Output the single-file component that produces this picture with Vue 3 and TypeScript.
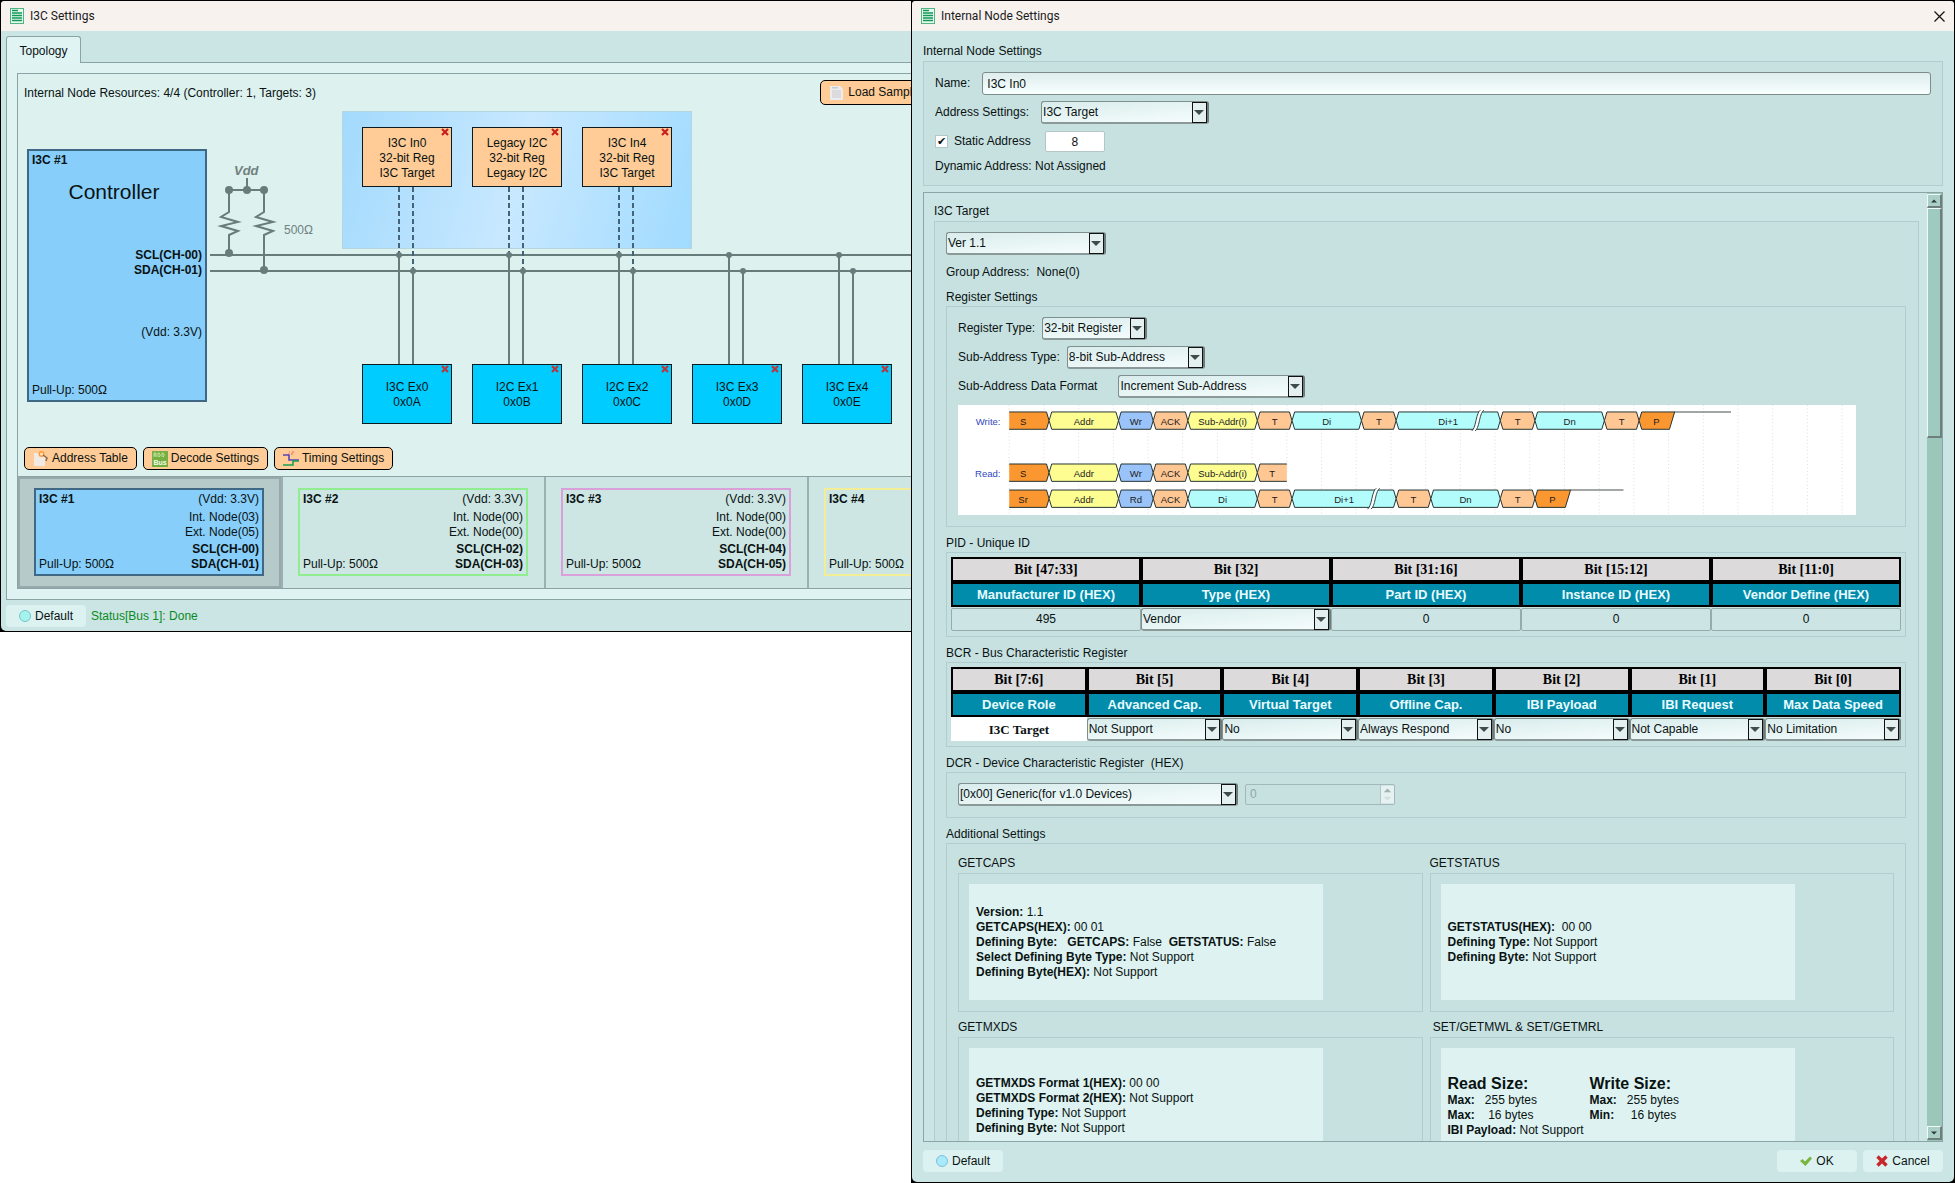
<script setup lang="ts">
import { ref } from 'vue'

interface TopologyNode { lines: string[]; column: number }
interface Bus { id: number; tone: string; detail?: { internal: string; external: string; scl: string; sda: string } }
interface Segment { from: number; to: number; text: string; fill: string; open?: boolean; end?: boolean; breakAt?: number; textAt?: number }
interface Lane { label: string; y: number; segments: Segment[]; tail?: [number, number] }

const internalNodes: TopologyNode[] = [
  { lines: ['I3C In0', '32-bit Reg', 'I3C Target'], column: 0 },
  { lines: ['Legacy I2C', '32-bit Reg', 'Legacy I2C'], column: 1 },
  { lines: ['I3C In4', '32-bit Reg', 'I3C Target'], column: 2 },
]
const externalNodes: TopologyNode[] = [
  { lines: ['I3C Ex0', '0x0A'], column: 0 },
  { lines: ['I2C Ex1', '0x0B'], column: 1 },
  { lines: ['I2C Ex2', '0x0C'], column: 2 },
  { lines: ['I3C Ex3', '0x0D'], column: 3 },
  { lines: ['I3C Ex4', '0x0E'], column: 4 },
]
const nodeLeft = (column: number): string => `${344 + column * 110}px`

const buses: Bus[] = [
  { id: 1, tone: 'active', detail: { internal: '03', external: '05', scl: '00', sda: '01' } },
  { id: 2, tone: 'green', detail: { internal: '00', external: '00', scl: '02', sda: '03' } },
  { id: 3, tone: 'violet', detail: { internal: '00', external: '00', scl: '04', sda: '05' } },
  { id: 4, tone: 'yellow' },
]

const deep = '#fb9731'
const yellow = '#fdfd92'
const blue = '#9ac4f9'
const peach = '#ffc793'
const cyan = '#b2fdfc'

const lanes: Lane[] = [
  {
    label: 'Write:', y: 8, tail: [825, 891],
    segments: [
      { from: 0, to: 1, text: 'S', fill: deep, open: true, textAt: 75 },
      { from: 1, to: 3, text: 'Addr', fill: yellow },
      { from: 3, to: 4, text: 'Wr', fill: blue },
      { from: 4, to: 5, text: 'ACK', fill: peach },
      { from: 5, to: 7, text: 'Sub-Addr(i)', fill: yellow },
      { from: 7, to: 8, text: 'T', fill: peach },
      { from: 8, to: 10, text: 'Di', fill: cyan },
      { from: 10, to: 11, text: 'T', fill: peach },
      { from: 11, to: 14, text: 'Di+1', fill: cyan, breakAt: 598 },
      { from: 14, to: 15, text: 'T', fill: peach },
      { from: 15, to: 17, text: 'Dn', fill: cyan },
      { from: 17, to: 18, text: 'T', fill: peach },
      { from: 18, to: 19, text: 'P', fill: deep, end: true },
    ],
  },
  {
    label: 'Read:', y: 68,
    segments: [
      { from: 0, to: 1, text: 'S', fill: deep, open: true, textAt: 75 },
      { from: 1, to: 3, text: 'Addr', fill: yellow },
      { from: 3, to: 4, text: 'Wr', fill: blue },
      { from: 4, to: 5, text: 'ACK', fill: peach },
      { from: 5, to: 7, text: 'Sub-Addr(i)', fill: yellow },
      { from: 7, to: 8, text: 'T', fill: peach, open: true, textAt: 362 },
    ],
  },
  {
    label: '', y: 98, tail: [705, 767],
    segments: [
      { from: 0, to: 1, text: 'Sr', fill: deep, open: true, textAt: 75 },
      { from: 1, to: 3, text: 'Addr', fill: yellow },
      { from: 3, to: 4, text: 'Rd', fill: blue },
      { from: 4, to: 5, text: 'ACK', fill: peach },
      { from: 5, to: 7, text: 'Di', fill: cyan },
      { from: 7, to: 8, text: 'T', fill: peach },
      { from: 8, to: 11, text: 'Di+1', fill: cyan, breakAt: 478 },
      { from: 11, to: 12, text: 'T', fill: peach },
      { from: 12, to: 14, text: 'Dn', fill: cyan },
      { from: 14, to: 15, text: 'T', fill: peach },
      { from: 15, to: 16, text: 'P', fill: deep, end: true },
    ],
  },
]

const edge = (unit: number): number => 65 + unit * 40

/* Closed outline that fills a segment */
function fillPath(s: Segment, y: number): string {
  const a = edge(s.from)
  const b = edge(s.to)
  const m = y + 10
  const z = y + 20
  if (s.open && s.from === 0) return `M59 ${y}H${b - 3}L${b} ${m}L${b - 3} ${z}H59Z`
  if (s.open) return `M${a} ${m}L${a + 3} ${y}H${b - 6}V${z}H${a + 3}Z`
  if (s.end) return `M${a} ${m}L${a + 3} ${y}H${b + 1}L${b - 5} ${z}H${a + 3}Z`
  return `M${a} ${m}L${a + 3} ${y}H${b - 3}L${b} ${m}L${b - 3} ${z}H${a + 3}Z`
}

/* Stroke of the same segment; open sides stay undrawn */
function strokePath(s: Segment, y: number): string {
  const a = edge(s.from)
  const b = edge(s.to)
  const m = y + 10
  const z = y + 20
  if (s.open && s.from === 0) return `M59 ${y}H${b - 3}L${b} ${m}L${b - 3} ${z}H59`
  if (s.open) return `M${b - 6} ${y}H${a + 3}L${a} ${m}L${a + 3} ${z}H${b - 6}`
  return fillPath(s, y)
}

const textX = (s: Segment): number => s.textAt ?? (edge(s.from) + edge(s.to)) / 2

const pidColumns = [
  { bits: 'Bit [47:33]', name: 'Manufacturer ID (HEX)', value: '495' },
  { bits: 'Bit [32]', name: 'Type (HEX)', value: 'Vendor', select: true },
  { bits: 'Bit [31:16]', name: 'Part ID (HEX)', value: '0' },
  { bits: 'Bit [15:12]', name: 'Instance ID (HEX)', value: '0' },
  { bits: 'Bit [11:0]', name: 'Vendor Define (HEX)', value: '0' },
]
const bcrColumns = [
  { bits: 'Bit [7:6]', name: 'Device Role', value: 'I3C Target', fixed: true },
  { bits: 'Bit [5]', name: 'Advanced Cap.', value: 'Not Support' },
  { bits: 'Bit [4]', name: 'Virtual Target', value: 'No' },
  { bits: 'Bit [3]', name: 'Offline Cap.', value: 'Always Respond' },
  { bits: 'Bit [2]', name: 'IBI Payload', value: 'No' },
  { bits: 'Bit [1]', name: 'IBI Request', value: 'Not Capable' },
  { bits: 'Bit [0]', name: 'Max Data Speed', value: 'No Limitation' },
]

const nodeName = ref('I3C In0')
const staticEnabled = ref(true)
const staticAddress = ref('8')
</script>

<template>
  <div class="desktop">
    <section class="window main-window" aria-label="I3C Settings">
      <header class="titlebar">
        <svg class="app-icon" viewBox="0 0 14 16"><rect x=".5" y=".5" width="13" height="15" fill="#e9f8ef" stroke="#4fb583" /><path d="M2 2.5h6M2 5h10M2 7.5h10M2 10h10M2 12.5h10" stroke="#12995a" stroke-width="1.4" /></svg>
        <h1>I3C Settings</h1>
      </header>
      <div class="main-body">
        <nav class="tabs"><button type="button" class="tab">Topology</button></nav>
        <div class="tab-pane">
          <div class="frame">
            <div class="resources">
              <p>Internal Node Resources: 4/4 (Controller: 1, Targets: 3)</p>
              <button type="button" class="tool load">
                <svg viewBox="0 0 16 16"><path d="M1 1h10l3 3v11H1z" fill="#ececec" /><path d="M3 2h6v1.5H3z" fill="#c3cbd4" /><path d="M3 5h9v8H3z" fill="#dcdadd" /></svg>
                Load Sample
              </button>
            </div>

            <div class="canvas">
              <div class="internal-zone"></div>
              <svg class="wires" width="1052" height="342" viewBox="0 0 1052 342" fill="none" stroke="#677d7c" stroke-width="2">
                <path d="M192 150H1052M192 166H1052" />
                <path d="M229 73v12M211 85h35M211 85v22l-8 5 17 5-17 4 17 5-9 4v18M246 85v22l-8 5 17 5-17 4 17 5-9 4v35" />
                <g fill="#677d7c" stroke="none">
                  <circle cx="211" cy="85" r="4" /><circle cx="229" cy="85" r="4" /><circle cx="246" cy="85" r="4" />
                  <circle cx="211" cy="148" r="4" /><circle cx="246" cy="165" r="4" />
                </g>
                <g v-for="node in internalNodes" :key="'in' + node.column" stroke="#44647a" stroke-dasharray="5 3">
                  <path :d="`M${381 + node.column * 110} 82V150M${395 + node.column * 110} 82V166`" />
                </g>
                <g v-for="node in externalNodes" :key="'ex' + node.column">
                  <path :d="`M${381 + node.column * 110} 150V260M${395 + node.column * 110} 166V260`" />
                  <circle :cx="381 + node.column * 110" cy="150" r="3" fill="#677d7c" stroke="none" />
                  <circle :cx="395 + node.column * 110" cy="166" r="3" fill="#677d7c" stroke="none" />
                </g>
              </svg>
              <span class="vdd">Vdd</span>
              <span class="ohm">500Ω</span>
              <div class="controller">
                <b>I3C #1</b>
                <span class="role">Controller</span>
                <div class="pins"><b>SCL(CH-00)</b><b>SDA(CH-01)</b></div>
                <span class="supply">(Vdd: 3.3V)</span>
                <span class="pull">Pull-Up: 500Ω</span>
              </div>
              <div v-for="node in internalNodes" :key="'a' + node.column" class="node internal" :style="{ left: nodeLeft(node.column) }">
                <button type="button" class="remove" aria-label="Remove"><svg viewBox="0 0 8 8"><path d="M1 1l6 6M7 1L1 7" stroke="#c6211f" stroke-width="2.2" /></svg></button>
                <span v-for="(line, i) in node.lines" :key="i">{{ line }}</span>
              </div>
              <div v-for="node in externalNodes" :key="'b' + node.column" class="node external" :style="{ left: nodeLeft(node.column) }">
                <button type="button" class="remove" aria-label="Remove"><svg viewBox="0 0 8 8"><path d="M1 1l6 6M7 1L1 7" stroke="#b9363c" stroke-width="2.2" /></svg></button>
                <span v-for="(line, i) in node.lines" :key="i">{{ line }}</span>
              </div>
            </div>

            <div class="tools">
              <button type="button" class="tool">
                <svg viewBox="0 0 16 16"><path d="M1 2h8l3 3v10H1z" fill="#f0e9e4" /><circle cx="8.5" cy="3" r="3" fill="#ff9a3c" /><circle cx="8.5" cy="3" r="1.5" fill="#ffe9c9" /><path d="M10 4l4 3-1 3" fill="none" stroke="#8a6a55" stroke-width="1.5" /></svg>
                Address Table
              </button>
              <button type="button" class="tool">
                <svg viewBox="0 0 16 16"><rect width="16" height="16" fill="#76b043" /><path d="M2 6V2h2v4M2 4h2M6 6V2h1l1 1v2L7 6M10 6V2h1l1 1v2l-1 1" fill="none" stroke="#c3e29c" /><text x="8" y="14" text-anchor="middle" font-size="7" font-weight="700" fill="#f3fbe8">Bus</text></svg>
                Decode Settings
              </button>
              <button type="button" class="tool">
                <svg viewBox="0 0 16 16"><path d="M6 1h1M8 3h2M5 3h1M9 1h2" stroke="#e8615d" fill="none" /><path d="M0 4h6v5h10" stroke="#5747b8" stroke-width="1.6" fill="none" /><path d="M0 14h10v-4h6" stroke="#17a354" stroke-width="1.6" fill="none" /></svg>
                Timing Settings
              </button>
            </div>

            <div class="buses">
              <article v-for="bus in buses" :key="bus.id" class="bus" :class="bus.tone">
                <div class="card">
                  <div class="column">
                    <b>I3C #{{ bus.id }}</b>
                    <span>Pull-Up: 500Ω</span>
                  </div>
                  <div v-if="bus.detail" class="column end">
                    <span>(Vdd: 3.3V)</span>
                    <div class="counts"><span>Int. Node({{ bus.detail.internal }})</span><span>Ext. Node({{ bus.detail.external }})</span></div>
                    <div class="counts"><b>SCL(CH-{{ bus.detail.scl }})</b><b>SDA(CH-{{ bus.detail.sda }})</b></div>
                  </div>
                </div>
              </article>
            </div>
          </div>
        </div>
        <footer class="statusbar">
          <button type="button" class="flat">
            <svg viewBox="0 0 12 12"><circle cx="6" cy="6" r="5.5" fill="#a4f3ef" stroke="#76c4c9" /></svg>
            Default
          </button>
          <output class="status">Status[Bus 1]: Done</output>
        </footer>
      </div>
    </section>

    <section class="window node-window" aria-label="Internal Node Settings">
      <header class="titlebar">
        <svg class="app-icon" viewBox="0 0 14 16"><rect x=".5" y=".5" width="13" height="15" fill="#e9f8ef" stroke="#4fb583" /><path d="M2 2.5h6M2 5h10M2 7.5h10M2 10h10M2 12.5h10" stroke="#12995a" stroke-width="1.4" /></svg>
        <h1>Internal Node Settings</h1>
        <button type="button" class="close" aria-label="Close"><svg viewBox="0 0 11 11"><path d="M.5.5l10 10M10.5.5l-10 10" stroke="#111" stroke-width="1.2" /></svg></button>
      </header>

      <div class="node-body">
        <h2>Internal Node Settings</h2>
        <div class="box form">
          <div class="field"><label for="name">Name:</label><input id="name" v-model="nodeName" class="text-input" type="text"></div>
          <div class="field">
            <label for="addr">Address Settings:</label>
            <span class="combo w-168"><select id="addr"><option>I3C Target</option></select></span>
          </div>
          <div class="field static">
            <label><input v-model="staticEnabled" type="checkbox">Static Address</label>
            <input v-model="staticAddress" class="address" type="text" aria-label="Static Address value">
          </div>
          <p>Dynamic Address: Not Assigned</p>
        </div>

        <div class="scroll-pane">
          <div class="scroll-content">
            <h2>I3C Target</h2>
            <div class="box target">
              <span class="combo w-160"><select aria-label="Version"><option>Ver 1.1</option></select></span>
              <p class="group-address"><span>Group Address:</span><span>None(0)</span></p>

              <h2>Register Settings</h2>
              <div class="box form">
                <div class="field tight"><label for="rt">Register Type:</label><span class="combo w-105"><select id="rt"><option>32-bit Register</option></select></span></div>
                <div class="field tight"><label for="st">Sub-Address Type:</label><span class="combo w-138"><select id="st"><option>8-bit Sub-Address</option></select></span></div>
                <div class="field loose"><label for="sf">Sub-Address Data Format</label><span class="combo w-187"><select id="sf"><option>Increment Sub-Address</option></select></span></div>
                <svg class="timing" viewBox="0 0 1035 127" role="img" aria-label="Sub-address timing">
                  <path v-for="k in 25" :key="k" :d="`M${19 + k * 40} 0V127`" stroke="#d3d3d3" stroke-dasharray="1 3" />
                  <g v-for="lane in lanes" :key="lane.y">
                    <text x="49" :y="lane.y + 15" text-anchor="end" fill="#3448c0">{{ lane.label }}</text>
                    <g v-for="s in lane.segments" :key="s.from">
                      <path :d="fillPath(s, lane.y)" :fill="s.fill" />
                      <path :d="strokePath(s, lane.y)" fill="none" stroke="#1c2b2b" stroke-width="1.1" />
                      <template v-if="s.breakAt">
                        <path :d="`M${s.breakAt - 6} ${lane.y + 22}q3-2 5-12t5-12h4q-3 2-5 12t-5 12z`" fill="#fff" />
                        <path :d="`M${s.breakAt - 6} ${lane.y + 22}q3-2 5-12t5-12M${s.breakAt - 2} ${lane.y + 22}q3-2 5-12t5-12`" fill="none" stroke="#1c2b2b" />
                      </template>
                      <text :x="textX(s)" :y="lane.y + 15" text-anchor="middle" fill="#1b1b1b">{{ s.text }}</text>
                    </g>
                    <path v-if="lane.tail" :d="`M${lane.tail[0]} ${lane.y}H${lane.tail[1]}`" stroke="#4a5153" stroke-width="1.2" />
                  </g>
                </svg>
              </div>

              <h2>PID - Unique ID</h2>
              <div class="box grid-box">
                <table>
                  <thead>
                    <tr><th v-for="c in pidColumns" :key="c.bits" class="bits">{{ c.bits }}</th></tr>
                    <tr><th v-for="c in pidColumns" :key="c.name" class="name">{{ c.name }}</th></tr>
                  </thead>
                  <tbody>
                    <tr>
                      <td v-for="c in pidColumns" :key="c.name">
                        <span v-if="c.select" class="combo"><select :aria-label="c.name"><option>{{ c.value }}</option></select></span>
                        <input v-else class="cell-input" type="text" :value="c.value" :aria-label="c.name">
                      </td>
                    </tr>
                  </tbody>
                </table>
              </div>

              <h2>BCR - Bus Characteristic Register</h2>
              <div class="box grid-box">
                <table>
                  <thead>
                    <tr><th v-for="c in bcrColumns" :key="c.bits" class="bits">{{ c.bits }}</th></tr>
                    <tr><th v-for="c in bcrColumns" :key="c.name" class="name">{{ c.name }}</th></tr>
                  </thead>
                  <tbody>
                    <tr>
                      <td v-for="c in bcrColumns" :key="c.name" :class="{ fixed: c.fixed }">
                        <template v-if="c.fixed">{{ c.value }}</template>
                        <span v-else class="combo"><select :aria-label="c.name"><option>{{ c.value }}</option></select></span>
                      </td>
                    </tr>
                  </tbody>
                </table>
              </div>

              <h2>DCR - Device Characteristic Register&nbsp; (HEX)</h2>
              <div class="box form">
                <div class="field tight">
                  <span class="combo w-280"><select aria-label="Device characteristic"><option>[0x00] Generic(for v1.0 Devices)</option></select></span>
                  <span class="spin">
                    <input type="number" value="0" disabled aria-label="Device characteristic value">
                    <svg viewBox="0 0 14 19"><rect width="14" height="19" fill="#e6f1f1" /><path d="M3 7l4-4 4 4z" fill="#a4b4b4" /><path d="M3 12l4 4 4-4z" fill="#d3dede" /></svg>
                  </span>
                </div>
              </div>

              <h2>Additional Settings</h2>
              <div class="box additional">
                <section>
                  <h2>GETCAPS</h2>
                  <div class="box reply">
                    <div class="panel">
                      <p><b>Version:</b> 1.1</p>
                      <p><b>GETCAPS(HEX):</b> 00 01</p>
                      <p><b>Defining Byte:&nbsp;&nbsp; GETCAPS:</b> False&nbsp; <b>GETSTATUS:</b> False</p>
                      <p><b>Select Defining Byte Type:</b> Not Support</p>
                      <p><b>Defining Byte(HEX):</b> Not Support</p>
                    </div>
                  </div>
                </section>
                <section>
                  <h2>GETSTATUS</h2>
                  <div class="box reply">
                    <div class="panel">
                      <p><b>GETSTATUS(HEX):</b>&nbsp; 00 00</p>
                      <p><b>Defining Type:</b> Not Support</p>
                      <p><b>Defining Byte:</b> Not Support</p>
                    </div>
                  </div>
                </section>
                <section>
                  <h2>GETMXDS</h2>
                  <div class="box reply">
                    <div class="panel">
                      <p><b>GETMXDS Format 1(HEX):</b> 00 00</p>
                      <p><b>GETMXDS Format 2(HEX):</b> Not Support</p>
                      <p><b>Defining Type:</b> Not Support</p>
                      <p><b>Defining Byte:</b> Not Support</p>
                    </div>
                  </div>
                </section>
                <section>
                  <h2>&nbsp;SET/GETMWL &amp; SET/GETMRL</h2>
                  <div class="box reply">
                    <div class="panel">
                      <div class="sizes">
                        <div>
                          <h3>Read Size:</h3>
                          <p><b>Max:</b>&nbsp;&nbsp; 255 bytes</p>
                          <p><b>Max:</b>&nbsp;&nbsp;&nbsp; 16 bytes</p>
                        </div>
                        <div>
                          <h3>Write Size:</h3>
                          <p><b>Max:</b>&nbsp;&nbsp; 255 bytes</p>
                          <p><b>Min:</b>&nbsp;&nbsp;&nbsp;&nbsp; 16 bytes</p>
                        </div>
                      </div>
                      <p><b>IBI Payload:</b> Not Support</p>
                    </div>
                  </div>
                </section>
              </div>
            </div>
          </div>
          <div class="scrollbar">
            <button type="button" aria-label="Scroll up"><svg viewBox="0 0 10 10"><path d="M2 6.5l3-3 3 3z" fill="#2c3c3a" /></svg></button>
            <div class="track"><div class="thumb"></div></div>
            <button type="button" aria-label="Scroll down"><svg viewBox="0 0 10 10"><path d="M2 3.5l3 3 3-3z" fill="#2c3c3a" /></svg></button>
          </div>
        </div>

        <footer class="actions">
          <button type="button" class="flat default">
            <svg viewBox="0 0 12 12"><circle cx="6" cy="6" r="5.5" fill="#a9eafa" stroke="#7cbfdc" /></svg>
            Default
          </button>
          <button type="button" class="flat">
            <svg viewBox="0 0 12 12"><path d="M0 6l2.5-2L5 6.500 10 1.500l2 2L5.500 11z" fill="#78b53c" /></svg>
            OK
          </button>
          <button type="button" class="flat">
            <svg viewBox="0 0 12 12"><path d="M1.5 1.5l9 9M10.5 1.5l-9 9" stroke="#c9262c" stroke-width="3.4" /></svg>
            Cancel
          </button>
        </footer>
      </div>
    </section>
  </div>
</template>

<style>
body {
  margin: 0;
  background: #fff;
}
</style>

<style scoped>
.desktop {
  display: grid;
  grid-template-columns: minmax(0, 911fr) minmax(0, 1044fr);
  align-items: start;
  height: 100vh;
  overflow: hidden;
  font: 12px/15px "Liberation Sans", Arial, sans-serif;
  color: #0a1212;
}
*, *::before, *::after { box-sizing: border-box; }
p, h1, h2, h3 { margin: 0; }
button, input, select {
  margin: 0;
  padding: 0;
  font: inherit;
  color: inherit;
  border-radius: 0;
}
button { cursor: pointer; }

.window {
  border: 1px solid #000;
  background: #000;
  display: flex;
  flex-direction: column;
}
.main-window { width: max-content; }
.node-window {
  position: relative;
  z-index: 1;
  height: 100vh;
  min-height: 0;
}
.titlebar {
  display: flex;
  align-items: center;
  gap: 6px;
  height: 30px;
  padding: 0 9px;
  background: #f8f2ef;
  border-radius: 3px 3px 0 0;
}
.titlebar h1 {
  font: 400 12px/16px Roboto, sans-serif;
  color: #1a1a1a;
}
.app-icon { width: 14px; height: 16px; }
.close {
  display: flex;
  margin-left: auto;
  border: 0;
  background: none;
}
.close svg { width: 11px; height: 11px; }

/* Topology window */
.main-body { background: #cae5e4; border-radius: 0 0 5px 5px; }
.tabs {
  display: flex;
  height: 31px;
  padding: 5px 5px 0;
}
.tab {
  position: relative;
  z-index: 1;
  width: 75px;
  height: 27px;
  padding-top: 2px;
  border: 1px solid #8aa4a5;
  border-bottom: 0;
  border-radius: 3px 3px 0 0;
  background: #e0f4f3;
}
.tab-pane {
  margin: 0 5px;
  padding: 10px;
  border: 1px solid #8aa4a5;
  background: #dff3f2;
}
.frame {
  border: 1px solid #8aa4a5;
  background: #ddf1ef;
}
.resources {
  display: flex;
  justify-content: space-between;
  align-items: center;
  padding: 6px 142px 0 6px;
}
.resources p { padding-top: 2px; }
.tool {
  display: flex;
  align-items: center;
  gap: 3px;
  height: 23px;
  padding: 0 8px;
  border: 1px solid #000;
  border-radius: 5px;
  background: #ffcb96;
  white-space: nowrap;
}
.tool svg { width: 16px; height: 16px; }
.load { height: 25px; }
.canvas {
  position: relative;
  height: 342px;
}
.wires { position: absolute; left: 0; top: 0; }
.internal-zone {
  position: absolute;
  left: 324px;
  top: 6px;
  width: 350px;
  height: 138px;
  border: 1px solid #b5d5df;
  background: linear-gradient(105deg, #a3dafd, #c8e8ff 50%, #a0dbff);
}
.vdd, .ohm { position: absolute; color: #71817f; }
.vdd { left: 216px; top: 58px; font: italic 700 13px/15px "Liberation Sans", sans-serif; }
.ohm { left: 266px; top: 118px; }
.controller {
  position: absolute;
  left: 9px;
  top: 44px;
  width: 180px;
  height: 253px;
  padding: 2px 3px;
  border: 2px solid #3f6884;
  background: #87cefa;
  display: flex;
  flex-direction: column;
}
.role { margin-top: 11px; padding-right: 6px; font-size: 21px; line-height: 25px; text-align: center; }
.pins { display: flex; flex-direction: column; align-items: flex-end; margin-top: 44px; }
.supply { margin-top: 47px; text-align: right; }
.pull { margin-top: auto; }
.node {
  position: absolute;
  width: 90px;
  height: 60px;
  padding-top: 2px;
  border: 1px solid #0d1a20;
  display: flex;
  flex-direction: column;
  justify-content: center;
  align-items: center;
}
.internal { top: 22px; background: #ffcb96; }
.external { top: 259px; background: #00ccff; }
.remove {
  position: absolute;
  top: 0;
  right: 2px;
  display: flex;
  border: 0;
  background: none;
}
.remove svg { width: 8px; height: 8px; }
.tools { display: flex; gap: 6px; padding: 0 6px 6px; }

.buses { display: flex; border-top: 1px solid #8aa4a5; }
.bus {
  width: 263px;
  padding: 11px 16px 12px 15px;
  border-left: 2px solid #9db0b1;
  background: #cde6e4;
}
.bus.active { background: #b7caca; border: 2px solid #98a9ab; padding: 9px 15px 10px 14px; }
.card {
  display: flex;
  justify-content: space-between;
  height: 88px;
  padding: 2px 3px;
  border: 2px solid #90ee90;
}
.active .card { background: #87cefa; border-color: #3f6884; }
.violet .card { border-color: #d9a0d9; }
.yellow .card { border-color: #f3ee96; }
.column, .counts { display: flex; flex-direction: column; }
.column { justify-content: space-between; }
.end, .end .counts { align-items: flex-end; }

.statusbar { display: flex; align-items: center; gap: 5px; padding: 5px 5px 4px; }
.flat {
  display: flex;
  align-items: center;
  justify-content: center;
  gap: 4px;
  width: 80px;
  height: 22px;
  border: 0;
  border-radius: 4px;
  background: #dcf2f1;
}
.flat svg { width: 12px; height: 12px; }
.status { color: #0a8a22; }

/* Node settings window */
.node-body {
  flex: 1;
  min-height: 0;
  padding: 13px 11px 0;
  border-radius: 0 0 5px 5px;
  background: #cae5e4;
  display: flex;
  flex-direction: column;
}
h2 { font: inherit; margin-bottom: 2px; }
.box {
  border: 1px solid #b0cecf;
  background: #c7e1e1;
}
.form { display: flex; flex-direction: column; gap: 6px; padding: 10px 11px 11px; }
.field { display: flex; align-items: center; gap: 12px; height: 23px; }
.tight { gap: 7px; }
.loose { gap: 21px; }
.text-input {
  flex: 1;
  height: 23px;
  padding: 0 4px;
  border: 1px solid #7d8b8b;
  border-radius: 3px;
  background: linear-gradient(#deeded, #f8ffff);
}
.static label { display: flex; align-items: center; gap: 6px; padding-right: 2px; }
.static input[type="checkbox"] {
  appearance: none;
  width: 13px;
  height: 13px;
  border: 1px solid #b4c6c6;
  background: #fff;
}
.static input[type="checkbox"]:checked::before {
  content: "✔";
  display: block;
  font: 11px/11px "DejaVu Sans", sans-serif;
  text-align: center;
}
.address {
  width: 60px;
  height: 21px;
  border: 1px solid #b4c6c6;
  border-radius: 2px;
  background: #fff;
  text-align: center;
}
.combo { position: relative; display: block; height: 23px; }
.combo select {
  appearance: none;
  display: block;
  width: 100%;
  height: 100%;
  padding: 1px 18px 0 1px;
  border: 1px solid #7f8e8e;
  border-right: 2px solid #6f7c7c;
  border-bottom: 2px solid #8b9999;
  border-radius: 3px;
  background: linear-gradient(175deg, #d9ecec, #f6fdfd);
}
.combo::before {
  content: "";
  position: absolute;
  top: 1px;
  right: 2px;
  width: 15px;
  height: 21px;
  border: 1px solid #111;
  background: #e4f0f0;
  pointer-events: none;
}
.combo::after {
  content: "";
  position: absolute;
  top: 9px;
  right: 5px;
  border: 5px solid transparent;
  border-top-color: #3f4b4b;
  border-bottom: 0;
  pointer-events: none;
}
.w-105 { width: 105px; }
.w-138 { width: 138px; }
.w-160 { width: 160px; }
.w-168 { width: 168px; }
.w-187 { width: 187px; }
.w-280 { width: 280px; }

.scroll-pane {
  flex: 1;
  min-height: 0;
  display: flex;
  margin-top: 6px;
  border: 1px solid #8aa5a5;
}
.scroll-content {
  flex: 1;
  min-width: 0;
  overflow-y: auto;
  scrollbar-width: none;
  padding: 11px 8px 0 10px;
}
.target { padding: 10px 12px 12px 11px; }
.group-address { display: flex; gap: 7px; margin: 10px 0 9px; }
.target > h2 { padding-top: 1px; margin-bottom: 1px; }
.target > .box + h2 { margin-top: 8px; }
.timing {
  width: 100%;
  max-width: 898px;
  margin-top: 1px;
  background: #fff;
  font-size: 11px;
}
.grid-box { padding: 4px 4px 5px; }
table { width: 100%; table-layout: fixed; border-spacing: 0; }
th { height: 25px; padding: 0; border: 2px solid #000; }
.bits { background: #dcdadb; font: 700 14px/17px "Liberation Serif", "Times New Roman", serif; color: #000; }
.name { background: #028cab; font: 700 13px/17px "Liberation Sans", Arial, sans-serif; color: #e9fbff; }
td { height: 24px; padding: 0; vertical-align: middle; }
.fixed { background: #fff; font: 700 13px/15px "Liberation Serif", "Times New Roman", serif; text-align: center; }
.cell-input {
  display: block;
  width: 100%;
  height: 23px;
  border: 1px solid #93adad;
  border-radius: 2px;
  background: #cce5e4;
  text-align: center;
}
.spin { display: flex; width: 150px; height: 21px; border: 1px solid #a3b9b9; border-radius: 2px; }
.spin input {
  appearance: textfield;
  flex: 1;
  min-width: 0;
  padding: 0 4px;
  border: 0;
  background: none;
  color: #93a5a5;
}
.spin svg { width: 14px; height: 19px; border-left: 1px solid #b4c6c6; }

.additional {
  display: grid;
  grid-template-columns: repeat(2, minmax(0, 1fr));
  gap: 8px 7px;
  padding: 12px 11px;
}
.reply { padding: 10px 10px 11px; }
.panel {
  width: 80%;
  height: 116px;
  padding: 0 7px;
  background: #ddf2f1;
  display: flex;
  flex-direction: column;
  justify-content: center;
}
.sizes { display: flex; }
.sizes > div { width: 142px; }
h3 { font: 700 16px/19px "Liberation Sans", Arial, sans-serif; }

.scrollbar { display: flex; flex-direction: column; width: 15px; padding: 1px 0; background: #9bc7bb; }
.scrollbar button {
  display: flex;
  align-items: center;
  justify-content: center;
  height: 14px;
  border: 1px solid #f0fbf8;
  border-right: 2px solid #6f7f7c;
  border-bottom: 2px solid #6f7f7c;
  background: #a9cfc6;
}
.scrollbar svg { width: 10px; height: 10px; }
.track { flex: 1; }
.thumb {
  height: 25%;
  border: 1px solid #f0fbf8;
  border-right: 2px solid #6f7f7c;
  border-bottom: 2px solid #6f7f7c;
  background: #9fcac0;
}

.actions { display: flex; gap: 6px; padding: 8px 0 10px; }
.default { margin-right: auto; }
</style>
